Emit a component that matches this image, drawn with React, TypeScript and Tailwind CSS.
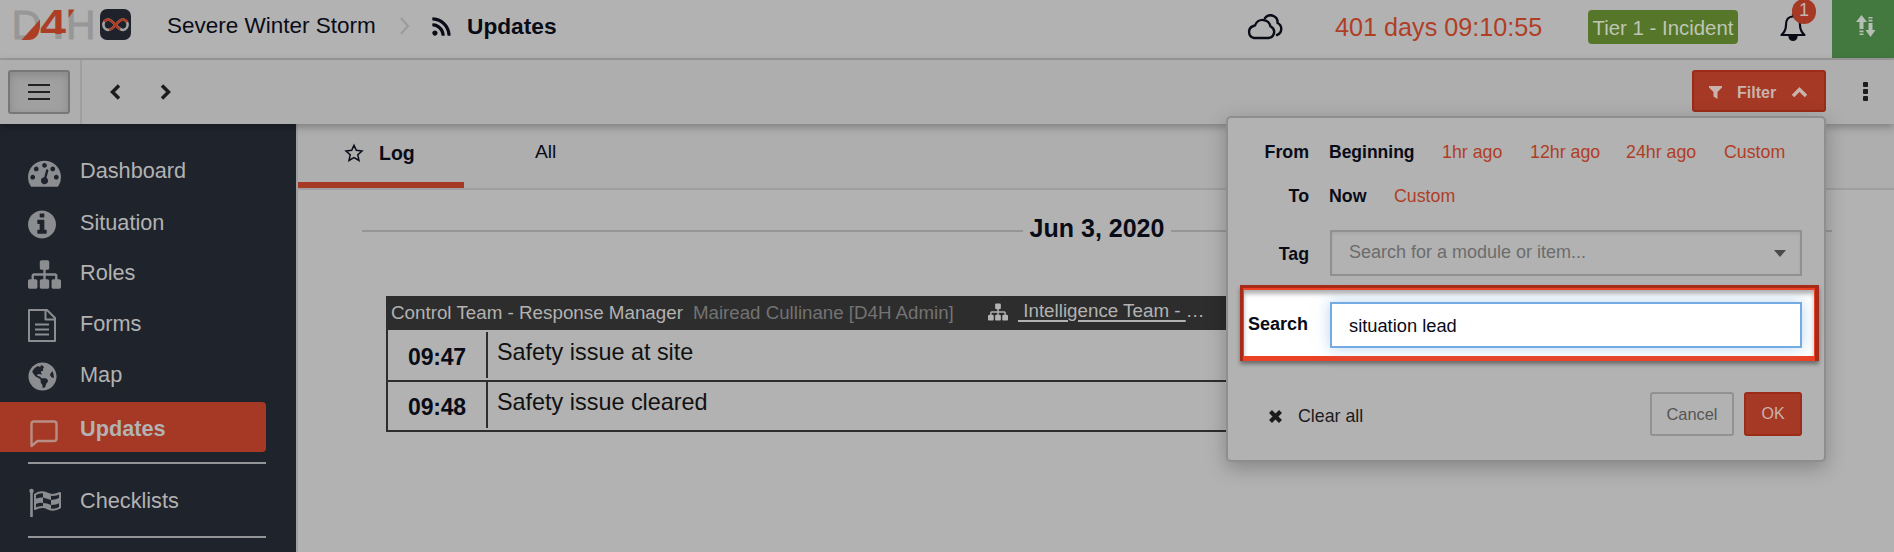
import React from "react";
import { FaGlobeAmericas, FaRss } from "react-icons/fa";

const SITEMAP =
  "M1792 1248v320q0 40-28 68t-68 28h-320q-40 0-68-28t-28-68v-320q0-40 28-68t68-28h96v-192h-512v192h96q40 0 68 28t28 68v320q0 40-28 68t-68 28h-320q-40 0-68-28t-28-68v-320q0-40 28-68t68-28h96v-192h-512v192h96q40 0 68 28t28 68v320q0 40-28 68t-68 28h-320q-40 0-68-28t-28-68v-320q0-40 28-68t68-28h96v-192q0-52 38-90t90-38h512v-192h-96q-40 0-68-28t-28-68v-320q0-40 28-68t68-28h320q40 0 68 28t28 68v320q0 40-28 68t-68 28h-96v192h512q52 0 90 38t38 90v192h96q40 0 68 28t28 68z";
const GAUGE =
  "M384 1152q0-53-37.5-90.5t-90.5-37.5-90.5 37.5-37.5 90.5 37.5 90.5 90.5 37.5 90.5-37.5 37.5-90.5zm192-448q0-53-37.5-90.5t-90.5-37.5-90.5 37.5-37.5 90.5 37.5 90.5 90.5 37.5 90.5-37.5 37.5-90.5zm428 481l101-382q6-26-7.5-48.5t-38.5-29.5-48 6.5-30 39.5l-101 382q-60 5-107 43.5t-63 98.5q-20 77 20 146t117 89 146-20 89-117q16-60-6-117t-72-91zm660-33q0-53-37.5-90.5t-90.5-37.5-90.5 37.5-37.5 90.5 37.5 90.5 90.5 37.5 90.5-37.5 37.5-90.5zm-640-640q0-53-37.5-90.5t-90.5-37.5-90.5 37.5-37.5 90.5 37.5 90.5 90.5 37.5 90.5-37.5 37.5-90.5zm448 192q0-53-37.5-90.5t-90.5-37.5-90.5 37.5-37.5 90.5 37.5 90.5 90.5 37.5 90.5-37.5 37.5-90.5zm320 448q0 261-141 483-19 29-54 29h-1402q-35 0-54-29-141-221-141-483 0-182 71-348t191-286 286-191 348-71 348 71 286 191 191 286 71 348z";
const INFO =
  "M1152 1376v-160q0-14-9-23t-23-9h-96v-512q0-14-9-23t-23-9h-320q-14 0-23 9t-9 23v160q0 14 9 23t23 9h96v320h-96q-14 0-23 9t-9 23v160q0 14 9 23t23 9h448q14 0 23-9t9-23zm-128-896v-160q0-14-9-23t-23-9h-192q-14 0-23 9t-9 23v160q0 14 9 23t23 9h192q14 0 23-9t9-23zm640 416q0 209-103 385.5t-279.5 279.5-385.5 103-385.5-103-279.5-279.5-103-385.5 103-385.5 279.5-279.5 385.5-103 385.5 103 279.5 279.5 103 385.5z";

function Logo() {
  return (
    <svg className="h-[50px] w-[136px] shrink-0" viewBox="0 0 136 50" fontFamily="Liberation Sans, sans-serif">
      <defs>
        <linearGradient id="four" gradientUnits="userSpaceOnUse" x1="0" y1="0" x2="0" y2="50">
          <stop offset="0.68" stopColor="#ad3e26" />
          <stop offset="0.68" stopColor="#979797" />
        </linearGradient>
      </defs>
      <text x="11.5" y="39" fontSize="41" fill="#979797" stroke="#979797" strokeWidth=".8" textLength="30" lengthAdjust="spacingAndGlyphs">D</text>
      <path d="M21.500 40L26 35L40 19.500V26Q39 40 28 40Z" fill="#ad3e26" />
      <text x="40" y="39" fontSize="42" fontWeight="700" fill="url(#four)" textLength="26" lengthAdjust="spacingAndGlyphs">4</text>
      <text x="66" y="39" fontSize="41" fill="#979797" stroke="#979797" strokeWidth=".8">H</text>
      <path d="M68.500 9.500H74.500L68.500 18Z" fill="#ad3e26" />
      <rect x="100" y="9" width="31" height="31" rx="7" fill="#1f222a" />
      <path d="M115.500 25C112 21 110 19.500 108 19.500A5.300 5.300 0 0 0 108 30C110.500 30 112.500 28.500 115.500 25S120.500 19.500 123 19.500A5.300 5.300 0 0 1 123 30C120.500 30 119 28.500 115.500 25Z" fill="none" stroke="#a3a3a3" strokeWidth="2.600" />
      <path d="M104 21.500Q106 19.500 108 19.500C110 19.500 112 21 115.500 25Q118 28 120 29.300M109 29.800C111 29.500 113 28 115.500 25S120.500 19.500 123 19.500Q126 19.800 127.500 22" fill="none" stroke="#ad3e26" strokeWidth="2.600" />
    </svg>
  );
}

function Header() {
  return (
    <header className="flex h-[60px] shrink-0 items-start border-b-2 border-[#9b9b9b] bg-[#b2b2b2]">
      <Logo />
      <div className="flex h-[52px] flex-1 items-center">
        <span className="ml-[31px] w-[232px] pt-px text-[22.500px]">Severe Winter Storm</span>
        <svg className="h-[18px] w-3" viewBox="0 0 12 18" fill="none" stroke="#9b9b9b" strokeWidth="2"><path d="M2 1L9 9L2 17" /></svg>
        <FaRss className="ml-[20px] size-[21px]" />
        <span className="ml-[15px] pt-px text-[22.700px] font-bold">Updates</span>
      </div>
      <div className="flex h-[54px] items-center">
        <svg className="mr-[51px] h-[26px] w-[38px]" viewBox="0 0 38 26" fill="none" stroke="#090c17" strokeWidth="2.400" strokeLinejoin="round" strokeLinecap="round">
          <path d="M8 24H22.500A6 6 0 0 0 24.500 12.500A8 8 0 0 0 9 11.500Q8 11.500 7.500 12A6.200 6.200 0 0 0 8 24Z" />
          <path d="M19 4A7 7 0 0 1 31.500 9A6.500 6.500 0 0 1 31 21" />
        </svg>
        <span className="w-[253px] pt-px text-[25.2px] text-[#b03e26]">401 days 09:10:55</span>
        <span className="flex h-[34px] w-[150px] items-center justify-center rounded bg-[#567729] pt-[2px] text-[20.400px] text-[#bfc5b6]">Tier 1 - Incident</span>
        <div className="relative ml-[41px] flex h-[54px] w-[53px] items-center">
          <svg className="h-[30px] w-[28px]" viewBox="0 0 28 30" fill="none" stroke="#090c17" strokeWidth="2.200" strokeLinejoin="round">
            <path d="M2.500 23Q7 19 7 13Q7 4.500 14 4.500T21 13Q21 19 25.500 23Z" />
            <path d="M14 4.500V1.500" /><path d="M10.500 24.500A3.500 3.500 0 0 0 17.500 24.500Z" fill="#090c17" />
          </svg>
          <span className="absolute -top-px left-[13px] flex h-[25px] w-6 items-center justify-center rounded-full bg-[#a53925] pb-[3px] text-[18px] text-[#c5b2ae]">1</span>
        </div>
      </div>
      <div className="flex h-[58px] w-[62px] items-center justify-center bg-[#43783f] pb-[6px] pl-[6px]">
        <svg className="h-[22px] w-[20px]" viewBox="0 0 20 22" fill="#b5bfb4">
          <path d="M5.500 0L11 7H7.500V14H3.500V7H0ZM3.500 15.500h4v1.800h-4zM3.500 18.500h4v1.500h-4zM14.500 22L9.500 15H12.500V8H16.500V15H19.500ZM12.500 4.800h4v1.700h-4zM12.500 2h4v1.500h-4z" />
        </svg>
      </div>
    </header>
  );
}

function Toolbar() {
  return (
    <div className="relative flex h-16 shrink-0 items-center bg-[#aeaeae] shadow-[0_3px_8px_rgba(0,0,0,0.28)]">
      <div className="flex h-full w-[82px] items-center border-r-2 border-[#9f9f9f] pl-2">
        <button className="flex h-11 w-[62px] items-center justify-center rounded-[3px] border-2 border-[#777] bg-[#a0a0a0] shadow-[inset_0_3px_8px_rgba(0,0,0,0.15)]">
          <svg className="h-[18px] w-[22px]" viewBox="0 0 22 18" stroke="#222" strokeWidth="2"><path d="M0 2H22M0 9H22M0 16H22" /></svg>
        </button>
      </div>
      <svg className="ml-[27px] h-[18px] w-[12px]" viewBox="0 0 12 18" fill="none" stroke="#1c1c1c" strokeWidth="3.500"><path d="M10 2.500L3.500 9L10 15.500" /></svg>
      <svg className="ml-[39px] h-[18px] w-[12px]" viewBox="0 0 12 18" fill="none" stroke="#1c1c1c" strokeWidth="3.500"><path d="M2 2.500L8.500 9L2 15.500" /></svg>
      <button className="mr-[37px] mb-[2px] ml-auto flex h-[42px] w-[134px] items-center rounded-[3px] border-2 border-[#9c2c18] bg-[#a53925] pl-[15px] text-[#c9b3ad]">
        <svg className="mt-[2px] h-[13px] w-[13px]" viewBox="0 0 13 13" fill="currentColor"><path d="M0 0H13V1.500L8.500 6V13L4.500 10.500V6L0 1.500Z" /></svg>
        <span className="mt-[3px] ml-[15px] text-[16px] font-bold">Filter</span>
        <svg className="mt-[2px] ml-[15px] h-[12px] w-[17px]" viewBox="0 0 17 12" fill="none" stroke="currentColor" strokeWidth="3.400"><path d="M2 10L8.500 3.500L15 10" /></svg>
      </button>
      <div className="mr-[26px] mb-[1px] flex flex-col gap-[2px]">
        <i className="size-[5px] rounded-[1px] bg-[#1c1c1c]" /><i className="size-[5px] rounded-[1px] bg-[#1c1c1c]" /><i className="size-[5px] rounded-[1px] bg-[#1c1c1c]" />
      </div>
    </div>
  );
}

function Wide({ d }: { d: string }) {
  return <svg className="size-[33px]" viewBox="0 0 1792 1792" fill="currentColor"><path d={d} /></svg>;
}

function NavItem({ icon, label, className }: { icon: React.ReactNode; label: string; className: string }) {
  return (
    <div className={"flex items-center pl-7 text-[21.700px] text-[#b2b2b2] " + className}>
      <span className="flex w-[52px] pt-[3px] text-[#8c8d91]">{icon}</span>
      <span>{label}</span>
    </div>
  );
}

function Sidebar() {
  return (
    <nav className="flex w-[298px] shrink-0 flex-col border-r-2 border-[#9f9f9f] bg-[#1f232c] pt-[21px]">
      <NavItem className="h-[52px]" label="Dashboard" icon={<Wide d={GAUGE} />} />
      <NavItem className="h-[51px] pt-px" label="Situation" icon={<svg className="h-[33px] w-7" viewBox="128 0 1536 1792" fill="currentColor"><path d={INFO} /></svg>} />
      <NavItem className="h-[50px]" label="Roles" icon={<Wide d={SITEMAP} />} />
      <NavItem
        className="h-[52px]"
        label="Forms"
        icon={
          <svg className="h-[33px] w-7" viewBox="0 0 28 33" fill="none" stroke="currentColor" strokeWidth="2" strokeLinejoin="round">
            <path d="M1 1H19L27 9V32H1ZM17.500 1V10.500H27M7 15.500H21M7 20.500H21M7 25.500H21" />
          </svg>
        }
      />
      <NavItem className="h-[52px] pb-[2px]" label="Map" icon={<FaGlobeAmericas className="size-[29px]" />} />
      <div className="mr-[30px] rounded-r bg-[#a53925]">
        <NavItem
          className="h-[50px] pt-[3px] font-bold"
          label="Updates"
          icon={
            <svg className="mt-[8px] ml-[2px] h-7 w-7 text-[#b88f86]" viewBox="0 0 28 28" fill="none" stroke="currentColor" strokeWidth="2.400" strokeLinejoin="round">
              <path d="M1.500 26V4Q1.500 1.500 4 1.500H24Q26.500 1.500 26.500 4V18.500Q26.500 21 24 21H7.500Z" />
            </svg>
          }
        />
      </div>
      <hr className="mt-[10px] mr-[30px] ml-7 border-t-2 border-[#949598]" />
      <NavItem
        className="h-[72px] pt-[2px]"
        label="Checklists"
        icon={
          <svg className="h-[30px] w-[34px]" viewBox="0 0 34 30" fill="none" stroke="currentColor">
            <circle cx="3.500" cy="3" r="2.200" fill="currentColor" stroke="none" />
            <path d="M3.500 3V29" strokeWidth="2.600" />
            <path d="M7 6.500Q13 2.500 19 5.500T32 5V19.500Q26 23.500 20 20.500T7 21Z" strokeWidth="2" strokeLinejoin="round" />
            <path d="M15 4.500Q18 5 23 7V12Q19 10.500 15 9.500ZM7 11Q11 9 15 9.500V15Q11 14 7 16.500ZM23 12Q28 11.500 32 9.500V15Q28 17 23 17ZM15 15Q19 15 23 17V21Q19 19.500 15 19.500Z" fill="currentColor" stroke="none" />
          </svg>
        }
      />
      <hr className="mr-[30px] ml-7 border-t-2 border-[#949598]" />
    </nav>
  );
}

function Entry({ time, text }: { time: string; text: string }) {
  return (
    <div className="flex h-[50px] items-start border-b-2 border-[#2d2d2d]">
      <div className="flex h-[46px] w-[100px] items-center justify-center border-r-2 border-[#2d2d2d] pt-[4px] text-[23px] font-bold tracking-[-0.2px]">{time}</div>
      <div className="flex h-[42px] items-center pl-[9px] text-[23.400px] text-[#111]">{text}</div>
    </div>
  );
}

function Content() {
  return (
    <main className="flex min-w-0 flex-1 flex-col bg-[#b2b2b2]">
      <div className="flex h-[66px] shrink-0 border-b-2 border-[#9f9f9f] bg-[#aeaeae]">
        <div className="flex h-[64px] w-[166px] items-center border-b-[6px] border-[#a53925] pl-[46px]">
          <svg className="mb-px h-[20px] w-[20px]" viewBox="0 0 20 20" fill="none" stroke="#090c17" strokeWidth="1.500" strokeLinejoin="miter">
            <path d="M10 2.200L12.300 7.300L18 8L13.800 11.800L15 17.500L10 14.700L5 17.500L6.200 11.800L2 8L7.700 7.300Z" />
          </svg>
          <span className="ml-[15px] pt-px text-[19.500px] font-bold">Log</span>
        </div>
        <div className="flex h-[55px] items-center pl-[71px] text-[19.200px]">All</div>
      </div>
      <div className="mt-[22px] mr-[62px] ml-[64px] flex h-[38px] items-center">
        <span className="h-[2px] flex-1 bg-[#969696]" />
        <span className="px-[7px] pb-[5px] text-[25px] font-bold">Jun 3, 2020</span>
        <span className="h-[2px] flex-1 bg-[#969696]" />
      </div>
      <section className="mt-[46px] mr-[86px] ml-[88px] border-x-2 border-[#2d2d2d]">
        <div className="mb-[2px] flex h-[34px] items-center bg-[#2d2d2d] pt-px pl-[3px] text-[18.800px] text-[#b2b2b2]">
          <span className="w-[302px]">Control Team - Response Manager</span>
          <span className="w-[295px] text-[18.700px] text-[#737373]">Mairead Cullinane [D4H Admin]</span>
          <svg className="mb-1 size-[20px]" viewBox="0 0 1792 1792" fill="currentColor"><path d={SITEMAP} /></svg>
          <span className="ml-[10px] pb-[4px]"><span className="underline decoration-2 underline-offset-[3px]">&nbsp;Intelligence Team -&nbsp;</span>…</span>
        </div>
        <Entry time="09:47" text="Safety issue at site" />
        <Entry time="09:48" text="Safety issue cleared" />
      </section>
    </main>
  );
}

function FilterPopover() {
  return (
    <div className="absolute top-[116px] left-[1226px] flex h-[346px] w-[600px] flex-col rounded-[5px] border-2 border-[#8e8e8e] bg-[#b2b2b2] pt-[12px] text-[17.800px] shadow-[0_6px_20px_rgba(0,0,0,0.25)]">
      <div className="flex h-11 items-center pt-[2px] text-[#b03e26]">
        <b className="w-[81px] text-right text-[#090c17]">From</b>
        <b className="ml-[20px] w-[113px] text-[17.500px] text-[#090c17]">Beginning</b>
        <span className="w-[88px]">1hr ago</span>
        <span className="w-[96px]">12hr ago</span>
        <span className="w-[98px]">24hr ago</span>
        <span>Custom</span>
      </div>
      <div className="flex h-11 items-center pt-[2px] text-[#b03e26]">
        <b className="w-[81px] text-right text-[#090c17]">To</b>
        <b className="ml-[20px] w-[65px] text-[#090c17]">Now</b>
        <span>Custom</span>
      </div>
      <div className="mt-[12px] flex h-[46px] items-center">
        <b className="w-[81px] pt-[4px] text-right">Tag</b>
        <div className="ml-[21px] flex h-[46px] w-[472px] items-center justify-between border-2 border-[#909090] pr-[14px] pb-[2px] pl-[17px] text-[18px] text-[#6c6c6c] shadow-[inset_0_2px_3px_rgba(0,0,0,0.06)]">
          Search for a module or item...
          <i className="mt-[2px] h-0 w-0 border-x-[6px] border-t-[7px] border-x-transparent border-t-[#4a4a4a]" />
        </div>
      </div>
      <div className="mt-[9px] ml-[12px] h-[76px] w-[579px] shrink-0 bg-[#a82a18] px-[3px] pt-[3px] pr-[4px] shadow-[0_3px_4px_rgba(0,0,0,0.4)]">
        <div className="h-[73px] border-[1px] border-t-2 border-b-[5px] border-[#eb4226] bg-white">
          <div className="flex h-full items-start pt-[12px] shadow-[inset_0_4px_4px_rgba(0,0,0,0.3)]">
            <b className="w-[64px] pt-[12px] text-right text-[18px] leading-[20px]">Search</b>
            <div className="ml-[22px] flex h-[46px] w-[472px] items-center border-2 border-[#74abe2] bg-white pt-[2px] pl-[17px] text-[18.300px] shadow-[0_0_14px_rgba(116,171,226,0.5)]">situation lead</div>
          </div>
        </div>
      </div>
      <div className="mt-[31px] flex h-11 items-center pl-[41px] text-[#1c1c1c]">
        <svg className="mt-[4px] h-[13px] w-[13px]" viewBox="0 0 13 13" stroke="#1c1c1c" strokeWidth="4.200"><path d="M1.500 1.500L11.500 11.500M11.500 1.500L1.500 11.500" /></svg>
        <span className="mt-[5px] ml-[16px]">Clear all</span>
        <button className="ml-auto h-11 w-[84px] rounded-[3px] border-2 border-[#929292] text-[16.400px] text-[#555]">Cancel</button>
        <button className="mr-[22px] ml-[10px] h-11 w-[58px] rounded-[3px] border-2 border-[#9c2c18] bg-[#a53925] text-[16px] text-[#c9b3ad]">OK</button>
      </div>
    </div>
  );
}

export default function App() {
  return (
    <div className="relative flex h-[552px] w-[1894px] flex-col overflow-hidden bg-[#b2b2b2] font-['Liberation_Sans',Arial,sans-serif] leading-none whitespace-nowrap text-[#090c17]">
      <Header />
      <Toolbar />
      <div className="flex min-h-0 flex-1">
        <Sidebar />
        <Content />
      </div>
      <FilterPopover />
    </div>
  );
}
